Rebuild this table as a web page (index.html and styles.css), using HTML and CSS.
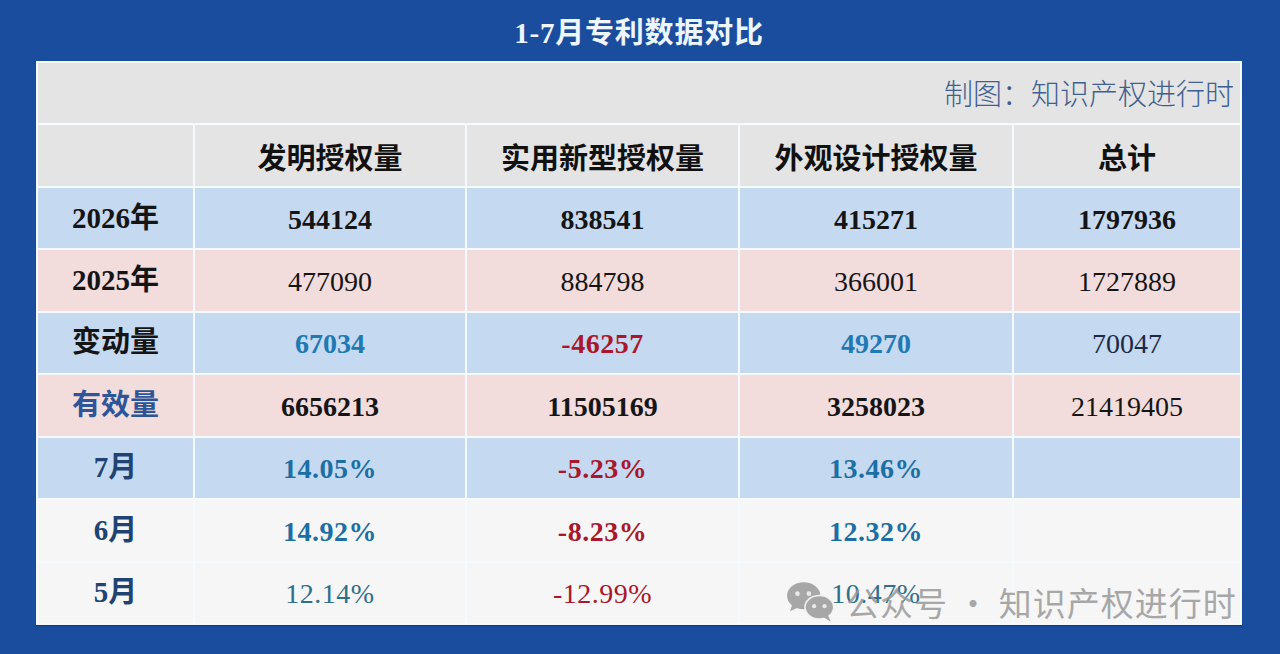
FILE: index.html
```html
<!DOCTYPE html>
<html lang="zh-CN">
<head>
<meta charset="utf-8">
<title>1-7月专利数据对比</title>
<link rel="stylesheet" href="styles.css">
</head>
<body>
<div class="page">
  <h1 class="title">1-7月专利数据对比</h1>
  <div class="sheet">
    <div class="cell credit">制图：知识产权进行时</div>

    <div class="cell head"></div>
    <div class="cell head">发明授权量</div>
    <div class="cell head">实用新型授权量</div>
    <div class="cell head">外观设计授权量</div>
    <div class="cell head">总计</div>

    <div class="cell blue label">2026年</div>
    <div class="cell blue num bold">544124</div>
    <div class="cell blue num bold">838541</div>
    <div class="cell blue num bold">415271</div>
    <div class="cell blue num bold">1797936</div>

    <div class="cell pink label">2025年</div>
    <div class="cell pink num">477090</div>
    <div class="cell pink num">884798</div>
    <div class="cell pink num">366001</div>
    <div class="cell pink num">1727889</div>

    <div class="cell blue label">变动量</div>
    <div class="cell blue num semi up">67034</div>
    <div class="cell blue num semi down">-46257</div>
    <div class="cell blue num semi up">49270</div>
    <div class="cell blue num navy">70047</div>

    <div class="cell pink label valid">有效量</div>
    <div class="cell pink num bold">6656213</div>
    <div class="cell pink num bold">11505169</div>
    <div class="cell pink num bold">3258023</div>
    <div class="cell pink num">21419405</div>

    <div class="cell blue label month">7月</div>
    <div class="cell blue num semi pct">14.05%</div>
    <div class="cell blue num semi down">-5.23%</div>
    <div class="cell blue num semi pct">13.46%</div>
    <div class="cell blue"></div>

    <div class="cell light label month">6月</div>
    <div class="cell light num semi pct">14.92%</div>
    <div class="cell light num semi down">-8.23%</div>
    <div class="cell light num semi pct">12.32%</div>
    <div class="cell light"></div>

    <div class="cell light label month">5月</div>
    <div class="cell light num pct soft">12.14%</div>
    <div class="cell light num down">-12.99%</div>
    <div class="cell light num pct soft">10.47%</div>
    <div class="cell light"></div>
  </div>

  <div class="watermark">
    <svg class="wx" viewBox="0 0 48 40" width="50" height="42" aria-hidden="true">
      <ellipse cx="17" cy="14" rx="16" ry="13" fill="#9a9a9a"/>
      <path d="M6 22 L4 29 L12 25 Z" fill="#9a9a9a"/>
      <circle cx="11" cy="12" r="2.2" fill="#e9e9e9"/>
      <circle cx="22" cy="12" r="2.2" fill="#e9e9e9"/>
      <ellipse cx="32" cy="25" rx="14.5" ry="12" fill="#f2f2f2"/>
      <ellipse cx="32" cy="25" rx="13" ry="10.5" fill="#9a9a9a"/>
      <path d="M40 32 L43 39 L35 34 Z" fill="#9a9a9a"/>
      <circle cx="27" cy="24" r="2" fill="#e9e9e9"/>
      <circle cx="37" cy="24" r="2" fill="#e9e9e9"/>
    </svg>
    <span class="wm-text">公众号 · 知识产权进行时</span>
  </div>
</div>
</body>
</html>
```

FILE: styles.css
```css
* { box-sizing: border-box; }

html, body {
  margin: 0;
  padding: 0;
}

body {
  background: #1a4d9e;
  font-family: "Liberation Serif", "Noto Sans CJK SC", serif;
  width: 1280px;
  height: 654px;
  overflow: hidden;
}

.page {
  position: relative;
  width: 1280px;
  height: 654px;
  padding: 0 38px 0 36px;
}

.title {
  margin: 0;
  height: 61px;
  display: flex;
  align-items: center;
  justify-content: center;
  padding-bottom: 2px;
  color: #eef6ff;
  font-size: 29px;
  font-weight: 700;
  letter-spacing: 0.8px;
}

.sheet {
  width: 1206px;
  height: 564px;
  background: #f4fbff;
  padding: 2px;
  display: grid;
  grid-template-columns: 155px 270px 271px 272px 226px;
  grid-template-rows: repeat(9, 1fr);
  gap: 2px;
  box-shadow: 0 1px 1px rgba(0, 0, 0, 0.25);
}

.cell {
  display: flex;
  align-items: center;
  justify-content: center;
  font-size: 29px;
  color: #151515;
  line-height: 1;
}

.credit {
  grid-column: 1 / -1;
  background: #e4e4e4;
  justify-content: flex-end;
  padding-right: 6px;
  padding-bottom: 1px;
  font-family: "Noto Sans CJK SC", sans-serif;
  font-weight: 300;
  font-size: 29px;
  color: #3f5f90;
}

.head {
  background: #e4e4e4;
  font-family: "Noto Sans CJK SC", sans-serif;
  font-weight: 700;
  font-size: 29px;
  color: #111;
  padding-top: 2px;
}

.blue { background: #c5d9f0; }
.pink { background: #f2dcdc; }
.light { background: #f6f6f6; }

.label {
  font-weight: 700;
  font-size: 29px;
  color: #151515;
}

.label.valid { color: #2d5598; }
.label.month { color: #1f4474; }

.num {
  font-size: 28px;
  padding-top: 3px;
}

.bold { font-weight: 700; }
.semi { font-weight: 700; }

.up { color: #2079b3; }
.down { color: #a8172b; letter-spacing: 0.5px; }
.navy { color: #1c2a45; }
.pct { color: #1c6fa4; letter-spacing: 0.5px; }
.pct.soft { color: #2e6f8c; }

.watermark {
  position: absolute;
  left: 786px;
  top: 581px;
  display: flex;
  align-items: center;
  gap: 10px;
  opacity: 0.85;
}

.wx { display: block; }

.wm-text {
  font-family: "Noto Sans CJK SC", sans-serif;
  font-size: 33px;
  line-height: 1;
  color: #9a9a9a;
  letter-spacing: 1px;
}
```
